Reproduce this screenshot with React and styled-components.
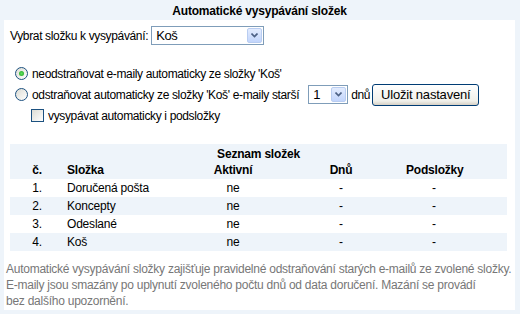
import React from 'react';
import styled, {createGlobalStyle} from 'styled-components';

const GlobalStyle = createGlobalStyle`
  html, body {
    margin: 0;
    padding: 0;
    background: #fff;
  }
  body {
    font-family: "Liberation Sans", Arial, sans-serif;
    font-size: 12px;
    color: #000;
  }
`;

const folders = [
    {n: '1.', name: 'Doručená pošta'},
    {n: '2.', name: 'Koncepty'},
    {n: '3.', name: 'Odeslané'},
    {n: '4.', name: 'Koš'},
];

const Panel = styled.div`
  width: 520px;
  height: 314px;
  box-sizing: border-box;
  background: #eef4fa;
  padding: 0 5px 4px 4px;
  display: flex;
  flex-direction: column;
`;

const Title = styled.div`
  height: 20px;
  line-height: 23px;
  text-align: center;
  font-weight: bold;
  letter-spacing: -0.2px;
`;

const Body = styled.div`
  flex: 1;
  background: #fff;
  padding: 5px 8px 0 6px;
  letter-spacing: -0.35px;
`;

const Line = styled.div`
  display: flex;
  align-items: center;
  gap: ${p => p.gap || 0}px;
  height: 21px;
  padding-left: ${p => p.indent || 0}px;
  margin-top: ${p => p.top || 0}px;
`;

const Select = styled.div`
  width: ${p => p.w}px;
  height: 19px;
  box-sizing: border-box;
  border: 1px solid #7f9db9;
  display: flex;
  align-items: center;
  justify-content: space-between;
  padding: 0 1px 0 4px;
  margin: 0 ${p => p.mr || 0}px 0 ${p => p.ml || 0}px;
  font-size: 13px;
  background: #fff;
`;

const Arrow = styled.span`
  width: 15px;
  height: 15px;
  box-sizing: border-box;
  border: 1px solid #b9cdf1;
  border-radius: 2px;
  background: linear-gradient(#e3ecfe, #c2d5fc);
  display: flex;
  align-items: center;
  justify-content: center;
`;

const Radio = styled.span`
  width: 11px;
  height: 11px;
  border-radius: 50%;
  border: 1px solid #1c5180;
  background: linear-gradient(135deg, #dcdcd4, #fff);
  display: inline-flex;
  align-items: center;
  justify-content: center;
  margin: 0 4px 0 2px;
  &::after {
    content: '';
    width: 5px;
    height: 5px;
    border-radius: 50%;
    background: ${p => p.checked ? 'radial-gradient(#5ee05e, #21a121)' : 'transparent'};
  }
`;

const Check = styled.span`
  width: 11px;
  height: 11px;
  border: 1px solid #1c5180;
  background: linear-gradient(135deg, #dcdcd4, #fff);
  margin-right: 4px;
`;

const Button = styled.button`
  height: 22px;
  padding: 0 8px;
  font-family: inherit;
  font-size: 13px;
  letter-spacing: -0.2px;
  border: 1px solid #003c74;
  border-radius: 3px;
  background: linear-gradient(#fff, #f0f0ea 80%, #d6d0c5);
  margin-left: 2px;
`;

const Table = styled.table`
  width: 497px;
  margin-top: 18px;
  border-collapse: collapse;
  table-layout: fixed;
  font-size: 12px;
  letter-spacing: -0.2px;
  th {
    font-weight: bold;
    padding: 0;
    height: 16px;
  }
  td {
    padding: 0;
    height: 18px;
  }
`;

const Head = styled.thead`
  background: #eef4fa;
`;

const Row = styled.tr`
  background: ${p => p.odd ? '#eef4fa' : '#fff'};
`;

const Col = styled.col`
  width: ${p => p.w}px;
`;

const Cell = styled.td`
  text-align: ${p => p.left ? 'left' : 'center'};
  padding-left: ${p => p.left ? 3 : 0}px !important;
`;

const HCell = styled.th`
  text-align: ${p => p.left ? 'left' : 'center'};
  padding-left: ${p => p.left ? 3 : 0}px !important;
  padding-top: ${p => p.top || 0}px !important;
  vertical-align: top;
`;

const Note = styled.p`
  margin: 10px -8px 0 -4px;
  color: #777;
  line-height: 16px;
  font-size: 12px;
  letter-spacing: -0.25px;
  white-space: nowrap;
`;

function ArrowIcon() {
    return (
        <Arrow>
            <svg width="7" height="5" viewBox="0 0 7 5">
                <path d="M0.5 0.5 L3.5 3.5 L6.5 0.5" fill="none" stroke="#4d6185" strokeWidth="1.6"/>
            </svg>
        </Arrow>
    );
}

export default function App() {
    return (
        <Panel>
            <GlobalStyle/>
            <Title>Automatické vysypávání složek</Title>
            <Body>
                <Line gap={3}>
                    Vybrat složku k vysypávání:
                    <Select w={113}>Koš<ArrowIcon/></Select>
                </Line>
                <Line top={17} indent={3}>
                    <Radio checked/>
                    neodstraňovat e-maily automaticky ze složky 'Koš'
                </Line>
                <Line indent={3}>
                    <Radio/>
                    odstraňovat automaticky ze složky 'Koš' e-maily starší
                    <Select w={40} ml={9} mr={3}>1<ArrowIcon/></Select>
                    dnů
                    <Button>Uložit nastavení</Button>
                </Line>
                <Line indent={21}>
                    <Check/>
                    vysypávat automaticky i podsložky
                </Line>

                <Table>
                    <colgroup>
                        <Col w={54}/>
                        <Col w={126}/>
                        <Col w={86}/>
                        <Col w={130}/>
                        <Col w={56}/>
                        <Col w={45}/>
                    </colgroup>
                    <Head>
                        <tr>
                            <HCell colSpan={6} top={3}>Seznam složek</HCell>
                        </tr>
                        <tr>
                            <HCell>č.</HCell>
                            <HCell left>Složka</HCell>
                            <HCell>Aktivní</HCell>
                            <HCell>Dnů</HCell>
                            <HCell>Podsložky</HCell>
                            <HCell/>
                        </tr>
                    </Head>
                    <tbody>
                        {folders.map((f, i) => (
                            <Row key={f.n} odd={i % 2 === 1}>
                                <Cell>{f.n}</Cell>
                                <Cell left>{f.name}</Cell>
                                <Cell>ne</Cell>
                                <Cell>-</Cell>
                                <Cell>-</Cell>
                                <Cell/>
                            </Row>
                        ))}
                    </tbody>
                </Table>

                <Note>
                    Automatické vysypávání složky zajišťuje pravidelné odstraňování starých e-mailů ze zvolené složky.<br/>
                    E-maily jsou smazány po uplynutí zvoleného počtu dnů od data doručení. Mazání se provádí<br/>
                    bez dalšího upozornění.
                </Note>
            </Body>
        </Panel>
    );
}
